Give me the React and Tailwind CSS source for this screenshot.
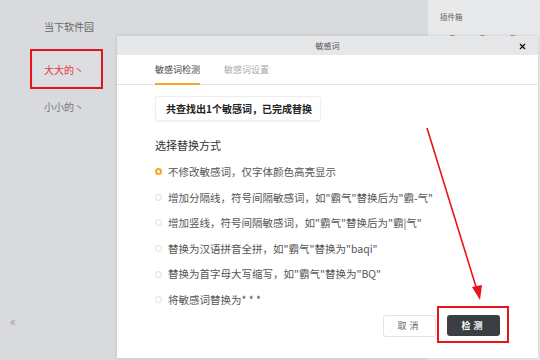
import { X } from 'lucide-react';

const font = { fontFamily: '"Noto Sans CJK SC", "Microsoft YaHei", sans-serif' };

const options = [
  '不修改敏感词，仅字体颜色高亮显示',
  '增加分隔线，符号间隔敏感词，如"霸气"替换后为"霸-气"',
  '增加竖线，符号间隔敏感词，如"霸气"替换后为"霸|气"',
  '替换为汉语拼音全拼，如"霸气"替换为"baqi"',
  '替换为首字母大写缩写，如"霸气"替换为"BQ"',
  '将敏感词替换为* * *',
];

function Radio({ checked }) {
  return checked ? (
    <span className="w-[7px] h-[7px] rounded-full border-2 border-[#f5a623] bg-white shrink-0" />
  ) : (
    <span className="w-[7px] h-[7px] rounded-full border border-[#dcdcdc] bg-white shrink-0" />
  );
}

function Modal() {
  return (
    <div className="absolute left-[117px] top-[36px] w-[421px] h-[322px] bg-white flex flex-col shadow-[0_0_3px_rgba(0,0,0,0.15)]">
      <div className="h-[19px] bg-[#e6e7e9] relative flex items-center justify-center">
        <span className="text-[8px] text-[#555]">敏感词</span>
        <X className="absolute right-[11px] top-[6px] w-[9px] h-[9px] text-black" strokeWidth={3} />
      </div>
      <div className="h-[30px] border-b border-[#e5e5e5] flex items-end pl-[38px] gap-[24px]">
        <div className="h-full flex flex-col justify-center relative">
          <span className="text-[9px] text-[#444]">敏感词检测</span>
          <span className="absolute left-0 right-0 -bottom-[1px] h-[2px] bg-[#f5a623]" />
        </div>
        <div className="h-full flex flex-col justify-center">
          <span className="text-[9px] text-[#aaa]">敏感词设置</span>
        </div>
      </div>
      <div className="pl-[38px] pt-[11px] flex flex-col">
        <div className="w-[166px] h-[25px] rounded-[3px] border border-[#eee] shadow-[0_1px_2px_rgba(0,0,0,0.06)] flex items-center pl-[10px]">
          <span className="text-[10px] font-bold text-[#222] whitespace-nowrap">共查找出1个敏感词，已完成替换</span>
        </div>
        <div className="mt-[16px] h-[16px] flex items-center text-[11px] text-[#333]">选择替换方式</div>
        <div className="mt-[6px] flex flex-col">
          {options.map((opt, i) => (
            <div key={i} className="h-[25.6px] flex items-center gap-[6px]">
              <Radio checked={i === 0} />
              <span className="text-[10.5px] text-[#555] whitespace-nowrap">{opt}</span>
            </div>
          ))}
        </div>
      </div>
      <div className="mt-auto pb-[21px] pr-[38px] flex justify-end gap-[11px]">
        <button className="w-[53px] h-[22px] rounded-[3px] border border-[#e3e3e3] bg-white text-[9px] text-[#666] tracking-[3px]">取消</button>
        <button className="w-[53px] h-[21px] rounded-[3px] bg-[#3b3f44] text-[9px] font-bold text-white tracking-[3px]">检测</button>
      </div>
    </div>
  );
}

export default function App() {
  return (
    <div className="relative w-[540px] h-[360px] overflow-hidden flex bg-[#d9dadd]" style={font}>
      {/* left sidebar */}
      <div className="flex-1 flex flex-col">
        <div className="pl-[44px] pt-[19px] text-[10px] text-[#666] h-[17px] box-content">当下软件园</div>
        <div className="ml-[30px] mt-[13px] w-[73px] h-[40px] border-2 border-[#e8141c] flex">
          <div className="flex-1 border border-[#c8dbe6] bg-[#dcdee1] flex items-center pl-[11px]">
            <span className="text-[10px] text-[#e53935]">大大的丶</span>
          </div>
        </div>
        <div className="pl-[44px] mt-[10px] text-[10px] text-[#777]">小小的丶</div>
        <div className="mt-auto mb-[30px] pl-[10px] text-[12px] text-[#999]">«</div>
      </div>
      {/* right panel */}
      <div className="w-[112px] bg-[#e8e9eb] pl-[12px] pt-[11px] flex flex-col">
        <span className="text-[7.5px] text-[#666]">插件箱</span>
        <div className="mt-[13px] flex gap-[19px] pl-[7px]">
          <span className="w-[11px] h-[11px] rounded-full border border-[#888]" />
          <span className="w-[11px] h-[11px] rounded-full border border-[#888]" />
          <span className="w-[11px] h-[11px] rounded-full border border-[#888]" />
        </div>
      </div>

      <Modal />

      {/* annotation: red box around 检测 */}
      <div className="absolute left-[437px] top-[306px] w-[72px] h-[37px] border-2 border-[#e8141c]" />
      {/* annotation: arrow */}
      <svg className="absolute left-0 top-0 pointer-events-none" width="540" height="360">
        <line x1="427" y1="128" x2="477" y2="290" stroke="#e8141c" strokeWidth="1.6" />
        <polygon points="480,300 472,287 482,285" fill="#e8141c" />
      </svg>
    </div>
  );
}
